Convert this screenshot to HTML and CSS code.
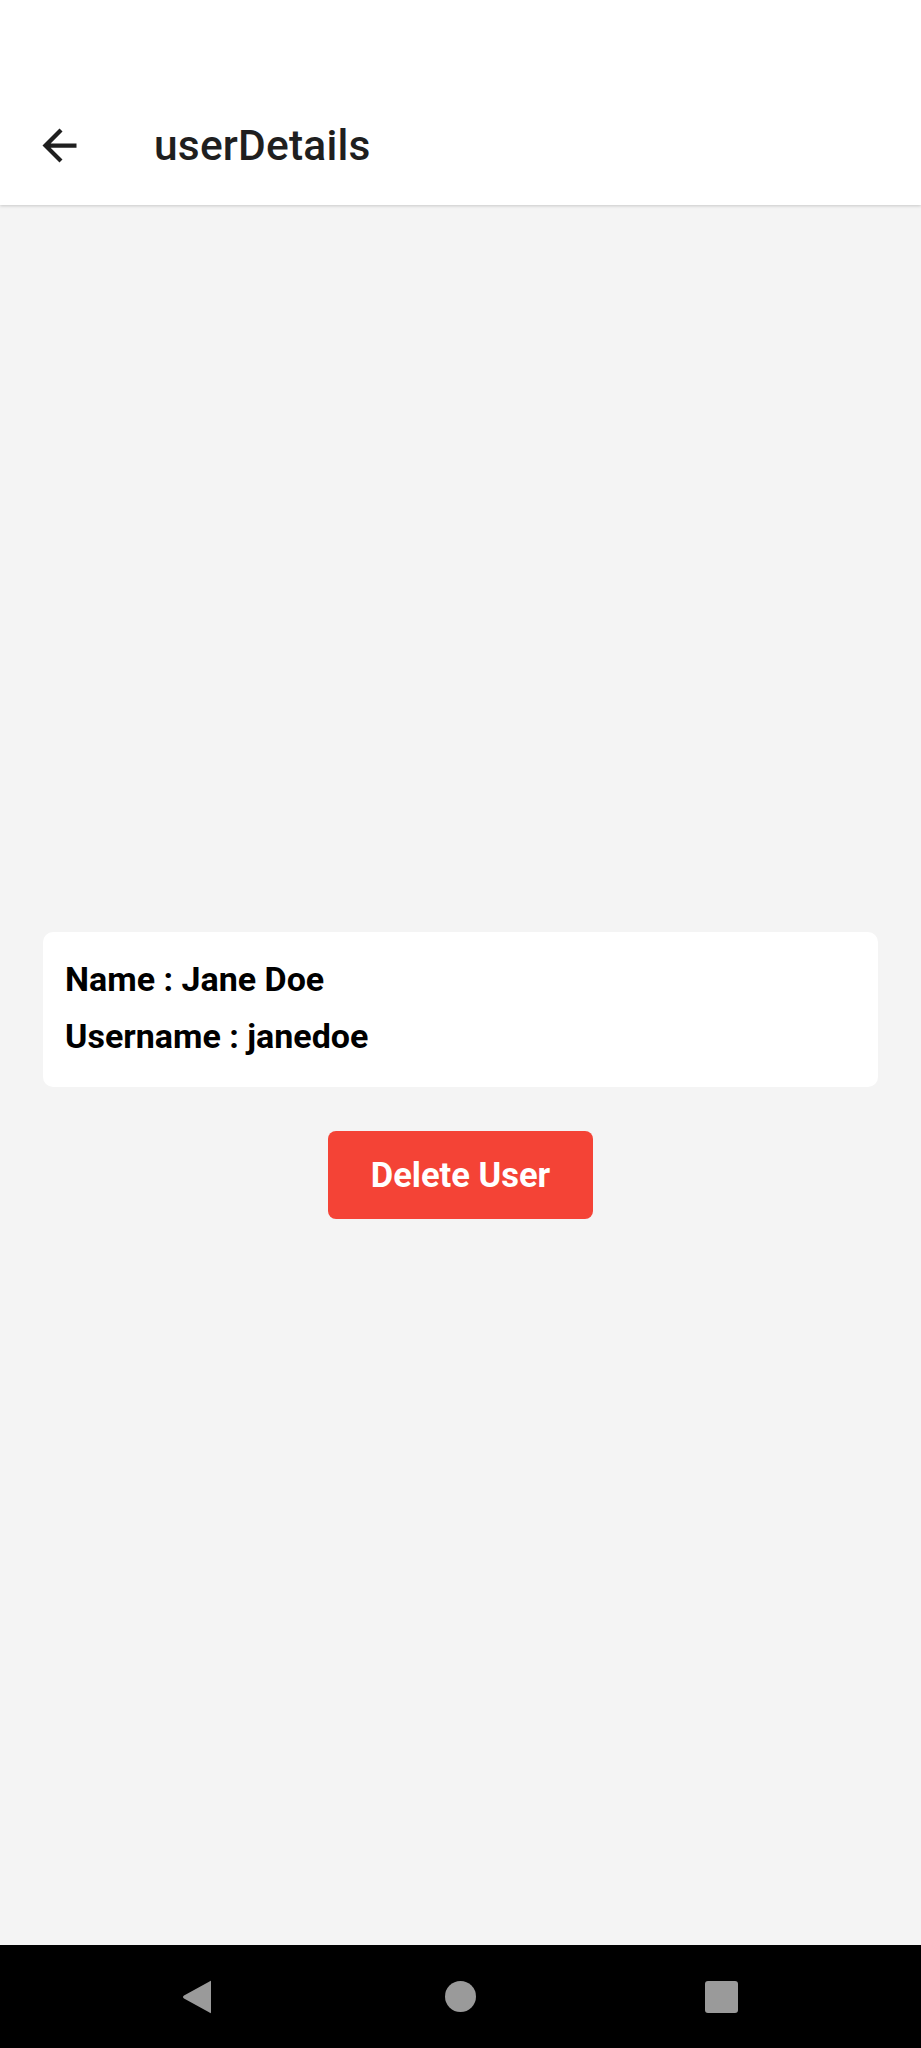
FILE: index.html
```html
<!DOCTYPE html>
<html>
<head>
<meta charset="utf-8">
<link rel="stylesheet" href="styles.css">
</head>
<body>
<div class="screen">
  <header class="appbar">
    <div class="toolbar">
      <svg class="back" viewBox="0 0 24 24" width="51" height="51"><path d="M20 11H7.83l5.59-5.59L12 4l-8 8 8 8 1.41-1.41L7.83 13H20v-2z" fill="#1f1f1f"/></svg>
      <h1 class="title">userDetails</h1>
    </div>
  </header>
  <main class="content">
    <div class="card">
      <p class="line">Name : Jane Doe</p>
      <p class="line">Username : janedoe</p>
    </div>
    <button class="delete">Delete User</button>
  </main>
  <nav class="navbar">
    <svg class="nav-back" viewBox="0 0 31 34" width="31" height="34"><path d="M29 2 L29 32 Q29 34 27.5 32.5 L2 18.5 Q0 17 2 15.5 L27.5 1.5 Q29 0 29 2 Z" fill="#9a9a9a"/></svg>
    <span class="nav-home"></span>
    <span class="nav-recent"></span>
  </nav>
</div>
</body>
</html>
```

FILE: styles.css
```css
html, body {
  margin: 0;
  padding: 0;
}
body {
  font-family: Roboto, "Liberation Sans", sans-serif;
  background: #f4f4f4;
}
.screen {
  width: 921px;
  height: 2048px;
  display: flex;
  flex-direction: column;
}
.appbar {
  height: 205px;
  background: #ffffff;
  box-shadow: 0 1px 3px rgba(0,0,0,0.18);
  position: relative;
  z-index: 1;
  display: flex;
  flex-direction: column;
  justify-content: flex-end;
}
.toolbar {
  height: 120px;
  display: flex;
  align-items: center;
  padding-left: 34px;
}
.back {
  display: block;
  flex: none;
}
.title {
  margin: 0 0 0 69px;
  font-size: 42.5px;
  font-weight: 500;
  color: #1f1f1f;
  letter-spacing: 0.2px;
}
.content {
  flex: 1;
  display: flex;
  flex-direction: column;
  align-items: center;
  justify-content: center;
}
.card {
  align-self: stretch;
  margin: 0 43px;
  background: #ffffff;
  border-radius: 10px;
  padding: 19px 22px 22px;
}
.line {
  margin: 0;
  font-size: 34px;
  line-height: 57px;
  font-weight: 700;
  color: #000000;
}
.delete {
  margin-top: 44px;
  width: 265px;
  height: 88px;
  border: none;
  border-radius: 8px;
  background: #f44336;
  color: #ffffff;
  font-family: Roboto, "Liberation Sans", sans-serif;
  font-weight: 700;
  font-size: 34.5px;
  padding: 0;
}
.navbar {
  height: 103px;
  background: #000000;
  display: flex;
  align-items: center;
  justify-content: space-between;
  padding: 0 183px 0 182px;
  box-sizing: border-box;
}
.nav-back {
  display: block;
}
.nav-home {
  width: 31px;
  height: 31px;
  border-radius: 50%;
  background: #9a9a9a;
  margin-left: 2px;
}
.nav-recent {
  width: 33px;
  height: 32px;
  border-radius: 3px;
  background: #9a9a9a;
}
```
